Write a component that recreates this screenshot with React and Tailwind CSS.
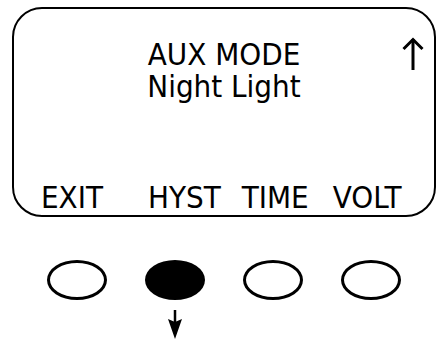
const labels = ['EXIT', 'HYST', 'TIME', 'VOLT'];

const UpArrow = () => (
  <svg width="22" height="34" viewBox="0 0 22 34" className="absolute right-[10px] top-[28px]">
    <path d="M11 2 L11 33" stroke="black" strokeWidth="3" fill="none" />
    <path d="M1.5 12 L11 2.5 L20.5 12" stroke="black" strokeWidth="3" fill="none" />
  </svg>
);

const DownArrow = () => (
  <svg width="16" height="30" viewBox="0 0 16 30" className="ml-[155px] mt-[9px]">
    <path d="M8 1 L8 20" stroke="black" strokeWidth="2.5" fill="none" />
    <path d="M1 10 L8 13 L15 10 L8 30 Z" fill="black" />
  </svg>
);

export default function App() {
  return (
    <div
      className="w-[438px] h-[341px] bg-white pt-[7px] pl-[12px] pr-[2px] overflow-hidden text-black"
      style={{ fontFamily: '"DejaVu Sans Condensed", "DejaVu Sans", sans-serif' }}
    >
      {/* display panel */}
      <div className="relative h-[210px] rounded-[30px] border-2 border-black flex flex-col">
        <UpArrow />
        <div className="pt-[29px] flex flex-col items-center text-[31px] leading-[32px]">
          <div>AUX MODE</div>
          <div>Night Light</div>
        </div>
        <div className="mt-auto pb-[3px] pl-[27px] flex text-[31px] leading-[30px]">
          <span>{labels[0]}</span>
          <span className="ml-[45px]">{labels[1]}</span>
          <span className="ml-[21px]">{labels[2]}</span>
          <span className="ml-[24px]">{labels[3]}</span>
        </div>
      </div>

      {/* buttons */}
      <div className="mt-[43px] ml-[35px] flex gap-[38px]">
        {labels.map((l, i) => (
          <div
            key={l}
            className={`w-[60px] h-[40px] rounded-[50%] border-[3px] border-black ${i === 1 ? 'bg-black' : 'bg-white'}`}
          />
        ))}
      </div>
      <DownArrow />
    </div>
  );
}
